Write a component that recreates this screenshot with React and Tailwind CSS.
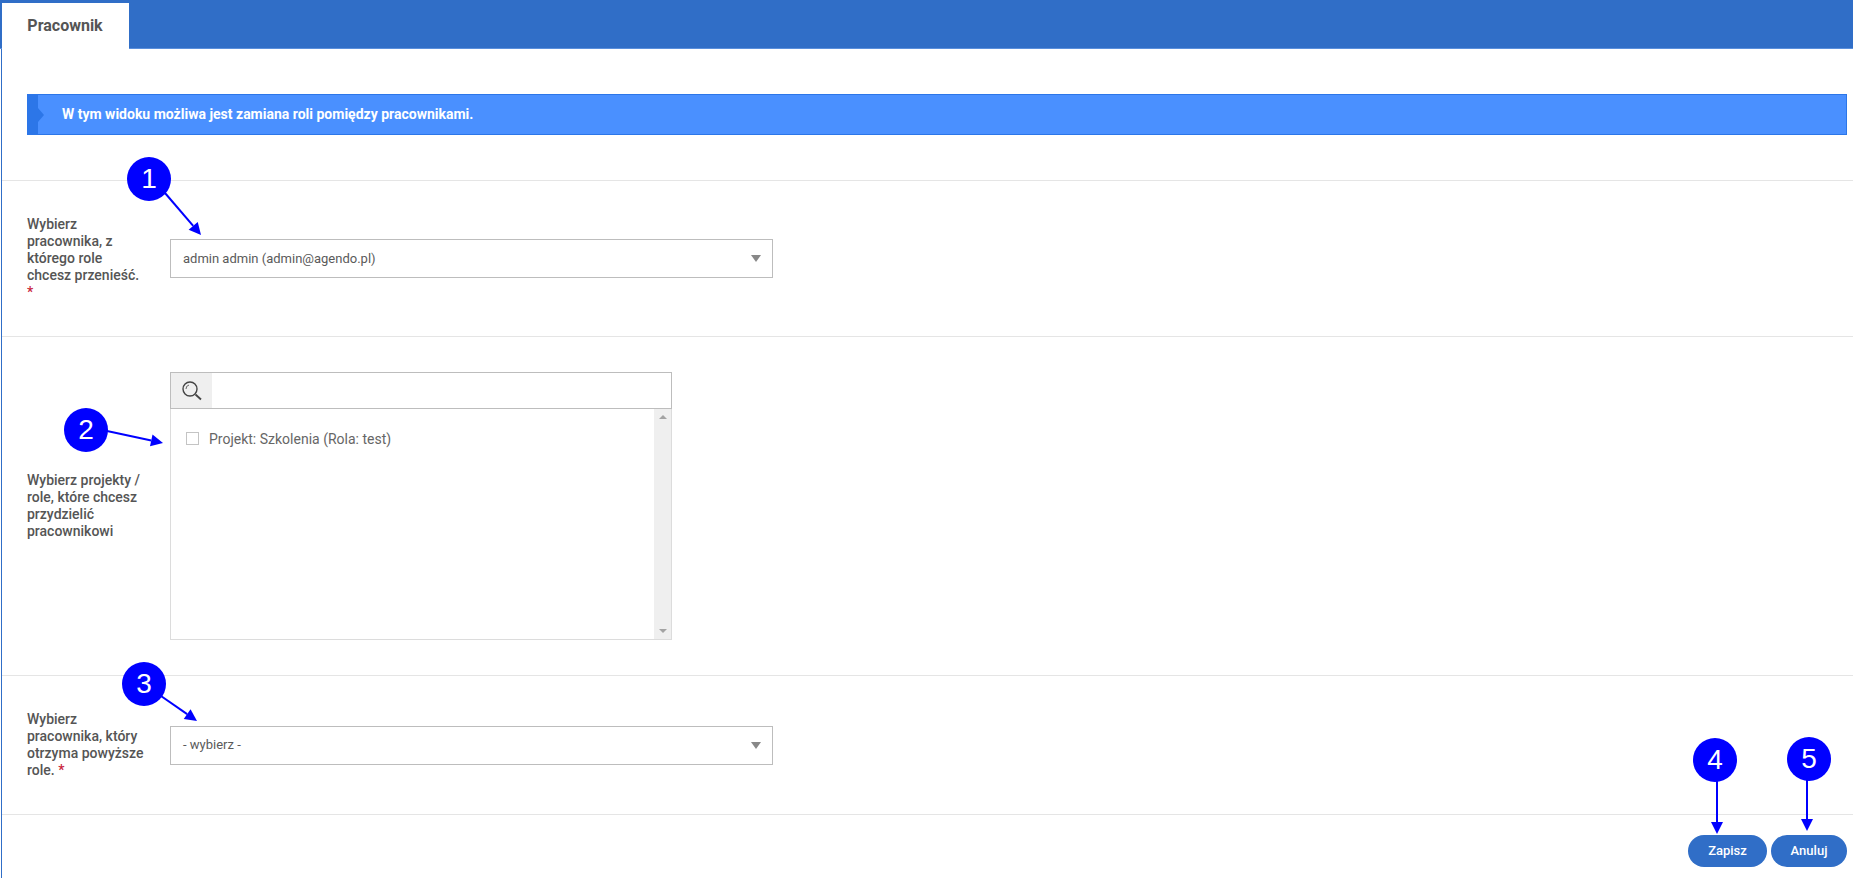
import React from "react";

function Req() {
  return <span className="text-[#c9253c]">*</span>;
}

function Row({ h, label, children }) {
  return (
    <div className={`flex items-center border-t border-[#e5e5e5] pl-[25px] ${h}`}>
      <div className="mr-[24px] w-[119px] shrink-0 text-[14px] leading-[17px] font-medium text-[#555]">{label}</div>
      {children}
    </div>
  );
}

function Select({ value }) {
  return (
    <div className="flex h-[39px] w-[603px] items-center justify-between border border-[#bdbdbd] bg-white pr-[11px] pl-[12px] text-[13px] text-[#5a5a5a]">
      <span>{value}</span>
      <span className="h-0 w-0 border-x-[5px] border-t-[7px] border-x-transparent border-t-[#888]" />
    </div>
  );
}

function Badge({ n, className }) {
  return (
    <div className={`absolute flex h-[44px] w-[44px] items-center justify-center rounded-full bg-[#0000ff] font-['Liberation_Sans',sans-serif] text-[28px] text-white ${className}`}>
      {n}
    </div>
  );
}

const arrows = [
  { x1: 165, y1: 193, x2: 201, y2: 235 },
  { x1: 107, y1: 431, x2: 163, y2: 443 },
  { x1: 161, y1: 696, x2: 197, y2: 721 },
  { x1: 1717, y1: 780, x2: 1717, y2: 834 },
  { x1: 1807, y1: 780, x2: 1807, y2: 831 },
];

function Arrow({ x1, y1, x2, y2 }) {
  const a = Math.atan2(y2 - y1, x2 - x1);
  const len = 12;
  const w = 6;
  const bx = x2 - len * Math.cos(a);
  const by = y2 - len * Math.sin(a);
  const px = -Math.sin(a) * w;
  const py = Math.cos(a) * w;
  return (
    <g>
      <line x1={x1} y1={y1} x2={bx} y2={by} stroke="#0000ff" strokeWidth="2" />
      <polygon points={`${x2},${y2} ${bx + px},${by + py} ${bx - px},${by - py}`} fill="#0000ff" />
    </g>
  );
}

export default function App() {
  return (
    <div className="relative h-[878px] w-[1853px] overflow-hidden bg-white font-['Roboto',sans-serif]">
      <div className="flex h-[49px] border-b border-[#5a8fdc] bg-[#306ec7] pt-[3px] pl-[2px]">
        <div className="-mb-px flex w-[127px] items-center justify-center bg-white pr-[1px] pb-[1px] text-[16px] font-bold text-[#555]">
          Pracownik
        </div>
      </div>

      <div className="ml-px h-[829px] border-l border-[#306ec7]">
        <div className="pt-[45px] pr-[6px] pb-[45px] pl-[25px]">
          <div className="relative flex h-[41px] items-center border border-[#2c76e8] bg-[#4a90ff] pl-[34px] text-[14px] font-bold text-white">
            <div className="absolute top-0 bottom-0 left-0 w-[10px] bg-[#2c76e8]" />
            <div className="absolute top-[13px] left-[10px] h-0 w-0 border-y-[7px] border-l-[6px] border-y-transparent border-l-[#2c76e8]" />
            <span className="relative">W tym widoku możliwa jest zamiana roli pomiędzy pracownikami.</span>
          </div>
        </div>

        <Row h="h-[156px]" label={<>Wybierz pracownika, z którego role chcesz przenieść. <Req /></>}>
          <Select value="admin admin (admin@agendo.pl)" />
        </Row>

        <Row h="h-[339px]" label="Wybierz projekty / role, które chcesz przydzielić pracownikowi">
          <div className="flex h-[268px] w-[502px] flex-col">
            <div className="flex h-[37px] shrink-0 border border-[#bdbdbd]">
              <div className="flex w-[41px] items-center justify-center bg-[#efefef]">
                <svg width="24" height="24" viewBox="0 0 24 24" fill="none" stroke="#444" strokeWidth="1.4">
                  <circle cx="10" cy="10" r="7" />
                  <path d="M15.5 15.5L21 20.5" strokeWidth="1.8" />
                  <path d="M6 10a4 4 0 0 1 3-4" strokeWidth="0.8" />
                </svg>
              </div>
            </div>
            <div className="flex flex-1 border-x border-b border-[#dcdcdc]">
              <div className="flex flex-1 items-start pt-[23px] pl-[15px] text-[14px] leading-[16px] text-[#666]">
                <span className="mr-[10px] h-[13px] w-[13px] border border-[#c4c4c4] bg-white" />
                <span className="-mt-[1px]">Projekt: Szkolenia (Rola: test)</span>
              </div>
              <div className="flex w-[17px] flex-col items-center justify-between bg-[#efefef] py-[6px]">
                <span className="h-0 w-0 border-x-[4px] border-b-[4px] border-x-transparent border-b-[#a3a3a3]" />
                <span className="h-0 w-0 border-x-[4px] border-t-[4px] border-x-transparent border-t-[#a3a3a3]" />
              </div>
            </div>
          </div>
        </Row>

        <Row h="h-[139px]" label={<>Wybierz pracownika, który otrzyma powyższe role. <Req /></>}>
          <Select value="- wybierz -" />
        </Row>

        <div className="flex justify-end gap-[4px] border-t border-[#e5e5e5] pt-[20px] pr-[6px]">
          <button className="h-[32px] w-[79px] rounded-full bg-[#306ec7] text-[13px] font-medium text-white">Zapisz</button>
          <button className="h-[32px] w-[76px] rounded-full bg-[#306ec7] text-[13px] font-medium text-white">Anuluj</button>
        </div>
      </div>

      <svg className="pointer-events-none absolute top-0 left-0" width="1853" height="878">
        {arrows.map((a, i) => (
          <Arrow key={i} {...a} />
        ))}
      </svg>
      <Badge n="1" className="top-[157px] left-[127px]" />
      <Badge n="2" className="top-[408px] left-[64px]" />
      <Badge n="3" className="top-[662px] left-[122px]" />
      <Badge n="4" className="top-[738px] left-[1693px]" />
      <Badge n="5" className="top-[737px] left-[1787px]" />
    </div>
  );
}
